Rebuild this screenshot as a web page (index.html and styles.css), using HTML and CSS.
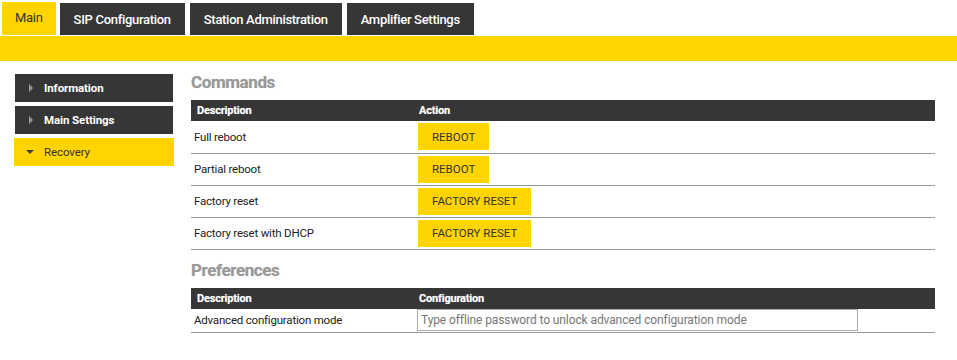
FILE: index.html
```html
<!DOCTYPE html>
<html>
<head>
<meta charset="utf-8">
<link rel="stylesheet" href="styles.css">
</head>
<body>
<nav class="tabs">
  <div class="tab tab-active">Main</div>
  <div class="tab">SIP Configuration</div>
  <div class="tab">Station Administration</div>
  <div class="tab">Amplifier Settings</div>
</nav>
<div class="bar"></div>
<div class="main">
  <aside class="sidebar">
    <div class="side-item"><span class="tri tri-right"></span>Information</div>
    <div class="side-item"><span class="tri tri-right"></span>Main Settings</div>
    <div class="side-item side-active"><span class="tri tri-down"></span>Recovery</div>
  </aside>
  <section class="content">
    <h2 class="heading">Commands</h2>
    <table class="grid">
      <thead>
        <tr><th class="col1">Description</th><th>Action</th></tr>
      </thead>
      <tbody>
        <tr><td class="col1">Full reboot</td><td><button class="btn">REBOOT</button></td></tr>
        <tr><td class="col1">Partial reboot</td><td><button class="btn">REBOOT</button></td></tr>
        <tr><td class="col1">Factory reset</td><td><button class="btn">FACTORY RESET</button></td></tr>
        <tr><td class="col1">Factory reset with DHCP</td><td><button class="btn">FACTORY RESET</button></td></tr>
      </tbody>
    </table>
    <h2 class="heading heading-2">Preferences</h2>
    <table class="grid">
      <thead>
        <tr><th class="col1">Description</th><th>Configuration</th></tr>
      </thead>
      <tbody>
        <tr class="row-input"><td class="col1">Advanced configuration mode</td><td><input class="field" type="text" placeholder="Type offline password to unlock advanced configuration mode"></td></tr>
      </tbody>
    </table>
  </section>
</div>
</body>
</html>
```

FILE: styles.css
```css
* { box-sizing: border-box; }
body {
  margin: 0;
  background: #fff;
  font-family: Roboto, "Liberation Sans", sans-serif;
  color: #222;
}
.tabs {
  display: flex;
  align-items: flex-end;
  gap: 4px;
  padding: 2px 0 0 2px;
  height: 35px;
}
.tab {
  height: 32px;
  display: flex;
  align-items: center;
  justify-content: center;
  padding: 0 14px;
  background: #363636;
  color: #fff;
  font-size: 13px;
  font-weight: 500;
  letter-spacing: -0.3px;
  margin-right: 1px;
}
.tab-active {
  height: 33px;
  background: #ffd400;
  color: #333;
  font-weight: 400;
  padding: 0 13px 2px;
  margin-right: 0;
}
.bar {
  margin-top: 1px;
  height: 25px;
  background: #ffd400;
}
.main {
  display: flex;
  padding: 13px 22px 0 15px;
  gap: 18px;
}
.sidebar {
  width: 158px;
  flex: none;
  display: flex;
  flex-direction: column;
  gap: 4px;
}
.side-item {
  height: 28px;
  background: #363636;
  color: #fff;
  font-size: 11.5px;
  font-weight: 700;
  letter-spacing: -0.1px;
  display: flex;
  align-items: center;
  padding-left: 14px;
}
.side-active {
  background: #ffd400;
  color: #333;
  font-weight: 400;
  margin: 0 -1px;
  padding-left: 12px;
}
.tri {
  width: 0;
  height: 0;
}
.tri-right {
  border-top: 4px solid transparent;
  border-bottom: 4px solid transparent;
  border-left: 4px solid #999;
  margin-right: 11px;
}
.tri-down {
  border-left: 4px solid transparent;
  border-right: 4px solid transparent;
  border-top: 4px solid #444;
  margin-right: 10px;
}
.content {
  flex: 1;
  margin-top: -5px;
}
.heading {
  margin: 0;
  height: 31px;
  line-height: 26px;
  font-size: 17px;
  font-weight: 700;
  letter-spacing: -0.4px;
  color: #999;
  text-shadow: 0 0 1px #ccc;
}
.heading-2 {
  margin-top: 8px;
  height: 30px;
  line-height: 25px;
}
.grid {
  width: 100%;
  border-collapse: collapse;
  font-size: 11.5px;
  letter-spacing: -0.2px;
}
.grid th {
  background: #363636;
  color: #fff;
  font-size: 11px;
  font-weight: 700;
  text-align: left;
  height: 21px;
  padding: 0 6px;
  text-shadow: 0 0 1px #999;
}
.grid td {
  height: 32px;
  padding: 0 3px;
  border-bottom: 1px solid #999;
  color: #222;
}
.grid th.col1, .grid td.col1 { width: 227px; }
.grid th + th { padding-left: 1px; }
.grid td + td { padding-left: 0; }
.row-input td { height: 23px; }
.btn {
  height: 27px;
  padding: 0 14px;
  border: none;
  background: #ffd400;
  color: #333;
  font-family: Roboto, "Liberation Sans", sans-serif;
  font-size: 11.5px;
  letter-spacing: 0;
  display: block;
}
.field {
  display: block;
  width: 441px;
  height: 22px;
  border: 1px solid #aaa;
  padding: 0 3px;
  font-family: Roboto, "Liberation Sans", sans-serif;
  font-size: 12px;
  letter-spacing: -0.1px;
  color: #333;
  margin: 0 0 1px -1px;
}
.field::placeholder { color: #777; }
```
